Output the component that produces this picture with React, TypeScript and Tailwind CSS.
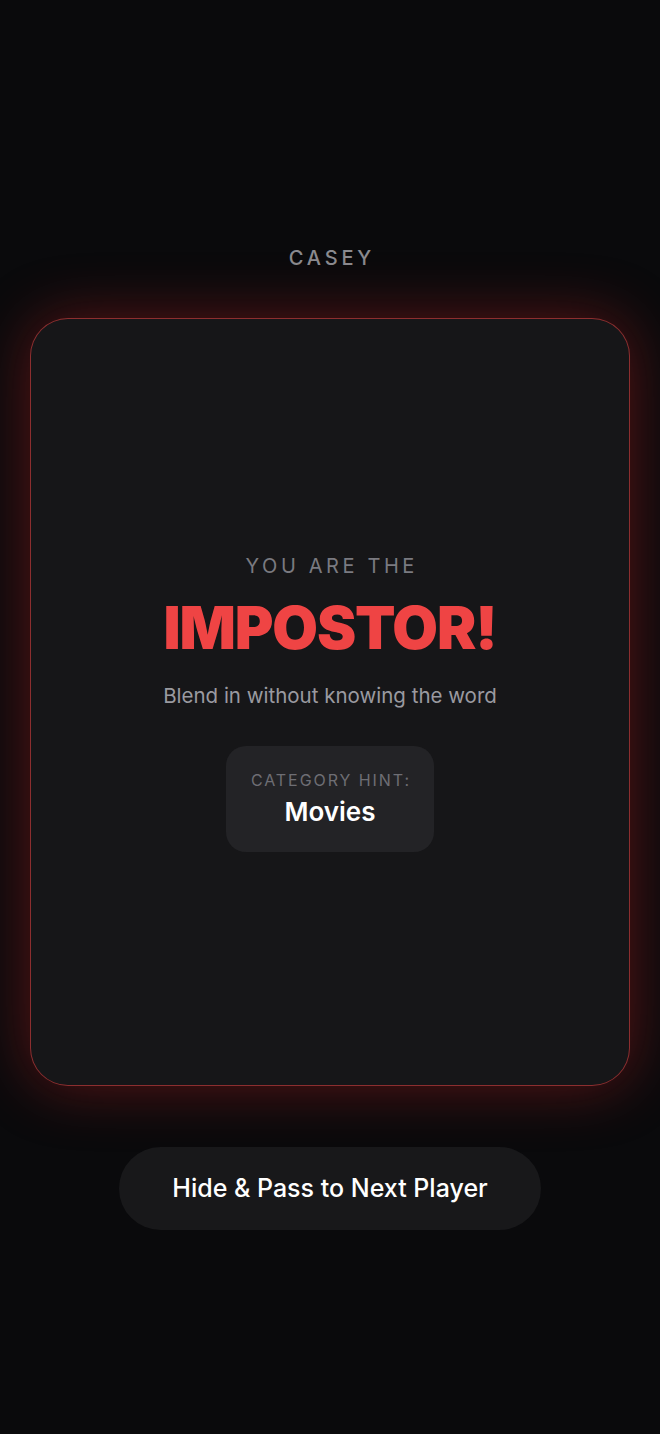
import React from "react";

export default function App() {
  return (
    <div
      className="min-h-[1434px] w-full bg-[#0a0a0c] flex flex-col items-center"
      style={{ fontFamily: "Inter, 'Noto Sans', sans-serif" }}
    >
      <div className="pt-[244px] text-[20px] leading-[28px] font-medium tracking-[0.19em] text-[#8a8a8f] pl-[0.19em]">
        CASEY
      </div>
      <div className="mt-[46px] w-[600px] h-[768px] rounded-[38px] bg-[#161618] border border-[#ef4444]/55 shadow-[0_0_60px_rgba(220,38,38,0.38)] flex flex-col items-center justify-center">
        <div className="text-[20px] leading-[28px] font-normal tracking-[0.18em] text-[#7a7a80] pl-[0.18em]">
          YOU ARE THE
        </div>
        <div className="mt-[13px] text-[59px] leading-[70px] font-black tracking-[-0.02em] text-[#ef4444]">
          IMPOSTOR!
        </div>
        <div className="mt-[19px] text-[20.5px] leading-[28px] text-[#9a9aa0]">
          Blend in without knowing the word
        </div>
        <div className="mt-[36px] w-[208px] h-[106px] rounded-[20px] bg-[#232326] flex flex-col items-center justify-center">
          <div className="text-[16px] leading-[22px] tracking-[0.12em] text-[#6e6e74] pl-[0.12em]">
            CATEGORY HINT:
          </div>
          <div className="mt-[4px] text-[26px] leading-[34px] font-semibold text-white">
            Movies
          </div>
        </div>
      </div>
      <button className="mt-[61px] w-[422px] h-[83px] rounded-full bg-[#18181a] text-white text-[25px] font-medium">
        Hide &amp; Pass to Next Player
      </button>
    </div>
  );
}
